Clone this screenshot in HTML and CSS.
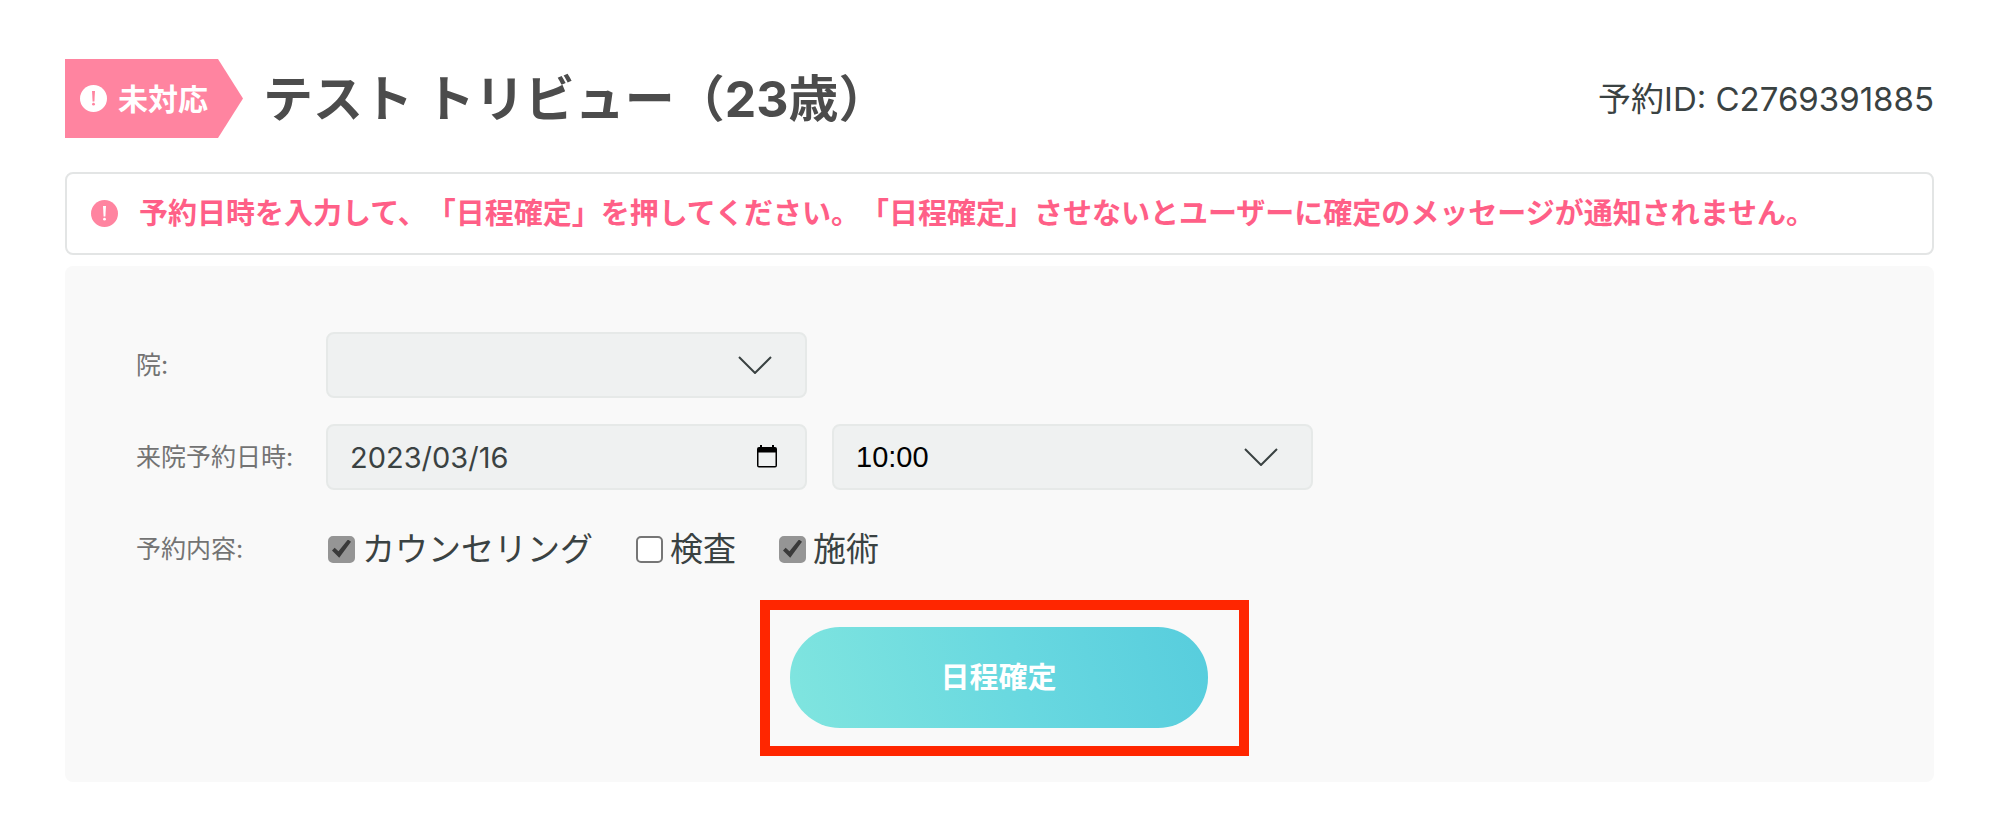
FILE: index.html
```
<!DOCTYPE html>
<html lang="ja">
<head>
<meta charset="utf-8">
<meta name="viewport" content="width=device-width, initial-scale=1">
<title>予約詳細</title>
<link rel="stylesheet" href="styles.css">
</head>
<body>
<main class="page">
  <header class="header">
    <div class="status">
      <svg class="icon-alert" viewBox="0 0 27 27" aria-hidden="true">
        <circle cx="13.500" cy="13.500" r="13.500" fill="#fff"/>
        <path d="M12 6h3l-.6 10.500h-1.800z" fill="#ff84a0"/>
        <circle cx="13.500" cy="19.200" r="1.400" fill="#ff84a0"/>
      </svg>
      <span>未対応</span>
    </div>
    <h1 class="title">テスト トリビュー（23歳）</h1>
    <p class="reservation-id">予約ID: C2769391885</p>
  </header>

  <div class="notice" role="alert">
    <svg class="icon-alert" viewBox="0 0 27 27" aria-hidden="true">
      <circle cx="13.500" cy="13.500" r="13.500" fill="#ff84a0"/>
      <path d="M12 6h3l-.6 10.500h-1.800z" fill="#fff"/>
      <circle cx="13.500" cy="19.200" r="1.400" fill="#fff"/>
    </svg>
    <p class="notice-text">予約日時を入力して、「日程確定」を押してください。「日程確定」させないとユーザーに確定のメッセージが通知されません。</p>
  </div>

  <form class="panel">
    <div class="rows">
      <div class="row">
        <label class="row-label" for="clinic">院:</label>
        <div class="control">
          <select class="field" id="clinic"><option></option></select>
          <svg class="chevron" viewBox="0 0 34 18" aria-hidden="true"><path d="M1 1l16 16L33 1"/></svg>
        </div>
      </div>
      <div class="row">
        <label class="row-label" for="date">来院予約日時:</label>
        <div class="control">
          <input class="field field-date" id="date" type="text" value="2023/03/16">
          <button class="calendar" type="button" aria-label="カレンダーを開く">
            <svg viewBox="0 0 20 23" aria-hidden="true">
              <path fill-rule="evenodd" d="M3 0h2v2h10V0h2v2h1a2 2 0 0 1 2 2v16.500a2 2 0 0 1-2 2H2a2 2 0 0 1-2-2V4a2 2 0 0 1 2-2h1zM1.500 7.500V21h17V7.500z"/>
            </svg>
          </button>
        </div>
        <div class="control">
          <select class="field" id="time" aria-label="来院予約時刻"><option>10:00</option></select>
          <svg class="chevron" viewBox="0 0 34 18" aria-hidden="true"><path d="M1 1l16 16L33 1"/></svg>
        </div>
      </div>
      <div class="row" role="group" aria-labelledby="menu-label">
        <span class="row-label" id="menu-label">予約内容:</span>
        <div class="checks">
          <label class="check"><input type="checkbox" checked>カウンセリング</label>
          <label class="check"><input type="checkbox">検査</label>
          <label class="check"><input type="checkbox" checked>施術</label>
        </div>
      </div>
    </div>
    <div class="actions">
      <div class="highlight">
        <button class="submit" type="submit">日程確定</button>
      </div>
    </div>
  </form>
</main>
</body>
</html>
```
FILE: styles.css
```
* {
  box-sizing: border-box;
}

body {
  margin: 0;
  background: #fff;
  color: #3a4242;
  font-family: Inter, "Noto Sans CJK JP", sans-serif;
  text-spacing-trim: space-all;
}

h1,
p {
  margin: 0;
}

.page {
  padding: 59px 66px 50px 65px;
}

.header {
  display: flex;
  align-items: center;
  margin-bottom: 34px;
}

.status {
  display: flex;
  align-items: center;
  gap: 11px;
  height: 79px;
  padding: 0 35px 0 15px;
  background: #ff84a0;
  color: #fff;
  font-size: 30px;
  font-weight: 700;
  line-height: 44px;
  clip-path: polygon(0 0, calc(100% - 25px) 0, 100% 50%, calc(100% - 25px) 100%, 0 100%);
}

.icon-alert {
  flex: none;
  width: 27px;
  height: 27px;
}

.title {
  margin-left: 20px;
  color: #4c4c4c;
  font-size: 50px;
  font-weight: 700;
  line-height: 72px;
}

.reservation-id {
  margin-left: auto;
  font-size: 33px;
  line-height: 48px;
}

.notice {
  display: flex;
  align-items: center;
  gap: 21px;
  min-height: 83px;
  margin-bottom: 11px;
  padding: 12px 24px;
  border: 2px solid #e3e5e5;
  border-radius: 8px;
}

.notice-text {
  color: #ff5f87;
  font-size: 29px;
  font-weight: 700;
  line-height: 44px;
}

.panel {
  padding: 66px 72px 26px 71px;
  border-radius: 8px;
  background: #f9f9f9;
}

.rows {
  display: grid;
  row-gap: 26px;
}

.row {
  display: flex;
  align-items: center;
  gap: 25px;
  min-height: 66px;
}

.row-label {
  flex: none;
  width: 165px;
  color: #737373;
  font-size: 25px;
  line-height: 36px;
}

.control {
  position: relative;
  flex: 0 1 481px;
}

.field {
  display: block;
  width: 100%;
  height: 66px;
  padding: 0 22px;
  border: 2px solid #e6e9e8;
  border-radius: 8px;
  background: #eff1f1;
  color: #000;
  font-family: "Liberation Sans", Arial, sans-serif;
  font-size: 29px;
  appearance: none;
}

.field-date {
  color: #3a4242;
  font-family: Inter, sans-serif;
}

.chevron {
  position: absolute;
  top: 24px;
  right: 35px;
  width: 34px;
  height: 18px;
  fill: none;
  stroke: #3a4242;
  stroke-width: 2;
  pointer-events: none;
}

.calendar {
  position: absolute;
  top: 21px;
  right: 30px;
  width: 20px;
  height: 23px;
  padding: 0;
  border: 0;
  background: none;
}

.calendar svg {
  display: block;
}

.checks {
  display: flex;
  flex-wrap: wrap;
  column-gap: 43px;
  padding-left: 2px;
}

.check {
  display: flex;
  align-items: center;
  gap: 7px;
  font-size: 33px;
  line-height: 48px;
}

.check input {
  position: relative;
  flex: none;
  width: 27px;
  height: 27px;
  margin: 0;
  border: 2px solid #767676;
  border-radius: 5px;
  background: #fff;
  appearance: none;
}

.check input:checked {
  border-color: #959595;
  background: #959595;
}

.check input:checked::after {
  content: "";
  position: absolute;
  inset: 2px;
  background: #3a3a3a;
  clip-path: polygon(0 58%, 14% 44%, 34% 62%, 84% 0, 100% 12%, 38% 96%);
}

.actions {
  display: flex;
  justify-content: center;
  margin-top: 18px;
  padding-left: 10px;
}

.highlight {
  padding: 17px 31px 18px 20px;
  border: 10px solid #ff2600;
}

.submit {
  display: block;
  width: 418px;
  height: 101px;
  padding: 0 0 6px;
  border: 0;
  border-radius: 50px;
  background: linear-gradient(75deg, #80e5df, #68d8e0 55%, #57cddd);
  color: #fff;
  font-family: inherit;
  font-size: 29px;
  font-weight: 700;
}
```
